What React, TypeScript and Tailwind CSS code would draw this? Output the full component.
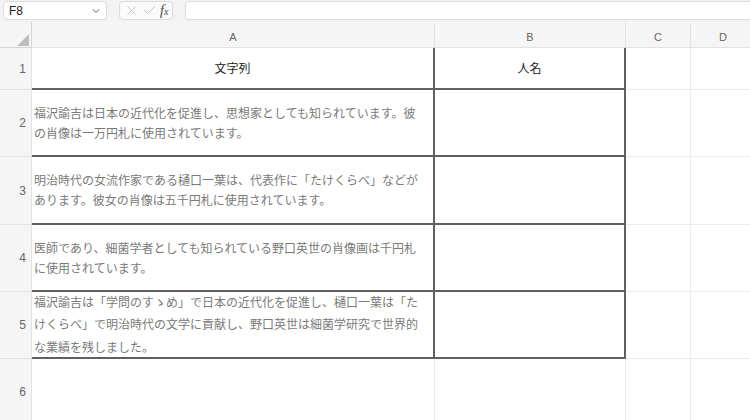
import { ChevronDown, X, Check } from 'lucide-react';

const font = { fontFamily: '"Noto Sans CJK JP", "Noto Sans", sans-serif' };

type Row = { n: number; h: string; a?: string[]; b?: string; head?: boolean; lead?: string };

const rows: Row[] = [
  { n: 1, h: 'h-[42px]', a: ['文字列'], b: '人名', head: true },
  {
    n: 2,
    h: 'h-[67px]',
    a: ['福沢諭吉は日本の近代化を促進し、思想家としても知られています。彼', 'の肖像は一万円札に使用されています。'],
  },
  {
    n: 3,
    h: 'h-[68px]',
    a: ['明治時代の女流作家である樋口一葉は、代表作に「たけくらべ」などが', 'あります。彼女の肖像は五千円札に使用されています。'],
  },
  {
    n: 4,
    h: 'h-[67px]',
    a: ['医師であり、細菌学者としても知られている野口英世の肖像画は千円札', 'に使用されています。'],
  },
  {
    n: 5,
    h: 'h-[67px]',
    lead: 'leading-[22.5px]',
    a: [
      '福沢諭吉は「学問のすゝめ」で日本の近代化を促進し、樋口一葉は「た',
      'けくらべ」で明治時代の文学に貢献し、野口英世は細菌学研究で世界的',
      'な業績を残しました。',
    ],
  },
];

function Toolbar() {
  return (
    <div className="flex h-[22px] items-start gap-2 bg-[#f3f3f3] pt-px pl-[3px]">
      <div className="flex h-[19px] w-[104px] items-center justify-between rounded-[4px] border border-[#dcdcdc] bg-white pr-1 pl-[5px] text-[12px] text-[#222]">
        <span style={{ fontFamily: '"Liberation Sans", Arial, sans-serif' }}>F8</span>
        <ChevronDown size={12} strokeWidth={1.8} className="text-[#555]" />
      </div>
      <div className="ml-1 flex h-[19px] w-[54px] items-center justify-around rounded-[4px] border border-[#dcdcdc] bg-[#fafafa] px-0.5">
        <X size={15} strokeWidth={1.4} className="shrink-0 text-[#bdbdbd]" />
        <Check size={15} strokeWidth={1.4} className="shrink-0 text-[#bdbdbd]" />
        <span className="text-[14px] leading-none text-[#444] italic" style={{ fontFamily: '"Liberation Serif", serif' }}>
          f<span className="text-[10px]">x</span>
        </span>
      </div>
      <div className="ml-1 h-[19px] flex-1 rounded-l-[4px] border border-r-0 border-[#dcdcdc] bg-white" />
    </div>
  );
}

function ColHeaders() {
  const cols = [
    { l: 'A', w: 'w-[403px]' },
    { l: 'B', w: 'w-[191px]' },
    { l: 'C', w: 'w-[65px]' },
    { l: 'D', w: 'w-[65px]' },
  ];
  return (
    <div className="flex h-[26px] bg-[#f5f5f5]" style={{ fontFamily: '"Liberation Sans", Arial, sans-serif' }}>
      <div className="relative w-[32px] shrink-0 border-r border-b border-[#d4d4d4]">
        <svg width="12" height="12" viewBox="0 0 12 12" className="absolute right-[2px] bottom-[1px]">
          <polygon points="12,0 12,12 0,12" fill="#bdbdbd" />
        </svg>
      </div>
      {cols.map((c) => (
        <div
          key={c.l}
          className={`${c.w} flex shrink-0 items-end justify-center border-r border-b border-[#e2e2e2] pb-[2px] text-[11px] text-[#666]`}
        >
          {c.l}
        </div>
      ))}
    </div>
  );
}

function DataRow({ r }: { r: Row }) {
  return (
    <div className={`flex ${r.h}`}>
      <div
        className="flex w-[32px] shrink-0 items-center justify-end border-r border-b border-[#e2e2e2] bg-[#f5f5f5] pr-[5px] text-[12px] text-[#666]"
        style={{ fontFamily: '"Liberation Sans", Arial, sans-serif' }}
      >
        {r.n}
      </div>
      <div
        className={`flex w-[403px] shrink-0 flex-col border-r-2 border-b-2 border-[#606060] text-[12px] ${
          r.head ? 'items-center justify-center text-[#222]' : `justify-center pl-[2px] text-[#7a7a7a] ${r.lead ?? 'leading-[20px]'}`
        }`}
        style={font}
      >
        {r.a?.map((l) => (
          <div key={l} className="whitespace-nowrap">
            {l}
          </div>
        ))}
      </div>
      <div
        className="flex w-[191px] shrink-0 items-center justify-center border-r-2 border-b-2 border-[#606060] text-[12px] text-[#222]"
        style={font}
      >
        {r.b}
      </div>
      <div className="w-[65px] shrink-0 border-r border-b border-[#ececec]" />
      <div className="w-[65px] shrink-0 border-r border-b border-[#ececec]" />
    </div>
  );
}

export default function App() {
  return (
    <div className="h-[420px] w-[750px] overflow-hidden bg-white">
      <Toolbar />
      <ColHeaders />
      {rows.map((r) => (
        <DataRow key={r.n} r={r} />
      ))}
      <div className="flex h-[67px]">
        <div
          className="flex w-[32px] shrink-0 items-center justify-end border-r border-b border-[#e2e2e2] bg-[#f5f5f5] pr-[5px] text-[12px] text-[#666]"
          style={{ fontFamily: '"Liberation Sans", Arial, sans-serif' }}
        >
          6
        </div>
        <div className="w-[403px] shrink-0 border-r border-b border-[#ececec]" />
        <div className="w-[191px] shrink-0 border-r border-b border-[#ececec]" />
        <div className="w-[65px] shrink-0 border-r border-b border-[#ececec]" />
        <div className="w-[65px] shrink-0 border-r border-b border-[#ececec]" />
      </div>
    </div>
  );
}
